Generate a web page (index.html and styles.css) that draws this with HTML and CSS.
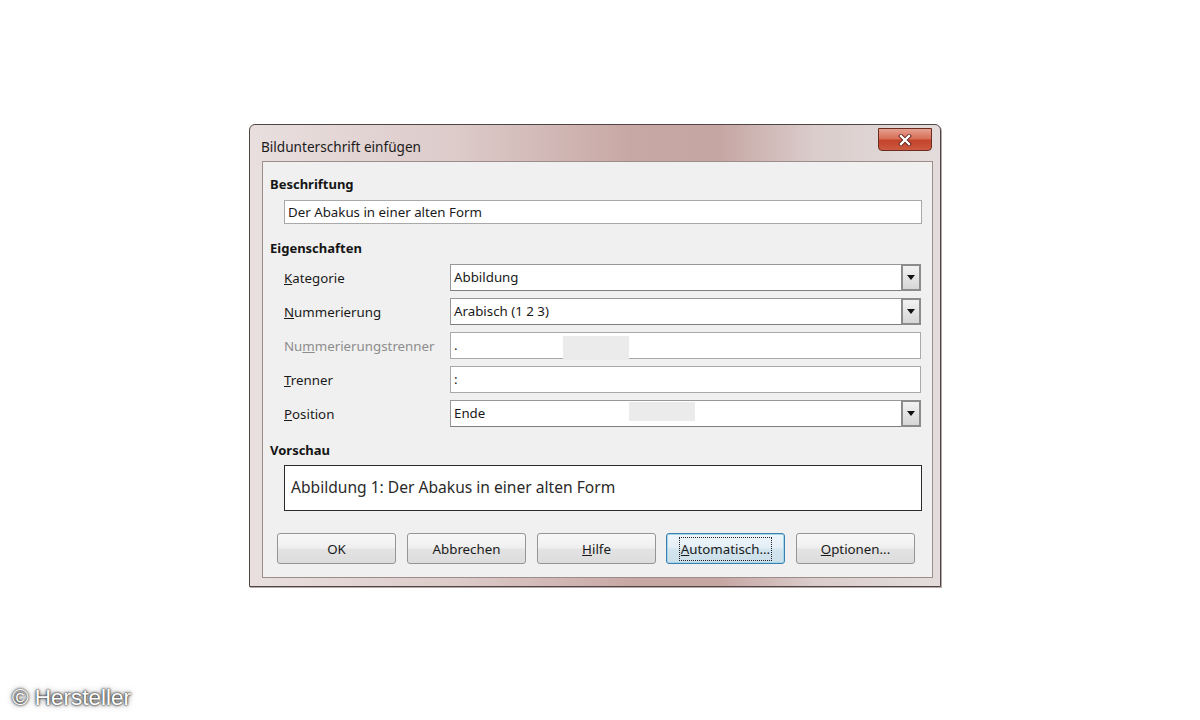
FILE: index.html
```html
<!DOCTYPE html>
<html lang="de">
<head>
    <meta charset="UTF-8">
    <title>Bildunterschrift einfügen</title>
    <link rel="stylesheet" href="styles.css">
</head>
<body>
    <div class="stage">
        <div class="dialog">
            <div class="titlebar">
                <span class="title">Bildunterschrift einfügen</span>
                <button type="button" class="close">
                    <svg width="14" height="12" viewBox="0 0 14 12">
                        <path d="M3 2 L11 10 M11 2 L3 10" stroke="#5a1d14" stroke-width="4" stroke-linecap="square"/>
                        <path d="M3 2 L11 10 M11 2 L3 10" stroke="#fff" stroke-width="2.4" stroke-linecap="square"/>
                    </svg>
                </button>
            </div>

            <div class="client">
                <h2 class="section">Beschriftung</h2>
                <div class="field caption-field">Der Abakus in einer alten Form</div>

                <h2 class="section">Eigenschaften</h2>
                <div class="props">
                    <label class="lbl"><u>K</u>ategorie</label>
                    <div class="field combo">Abbildung<span class="drop"></span></div>

                    <label class="lbl"><u>N</u>ummerierung</label>
                    <div class="field combo">Arabisch (1 2 3)<span class="drop"></span></div>

                    <label class="lbl disabled">Nu<u>m</u>merierungstrenner</label>
                    <div class="field">.<span class="smudge smudge-a"></span></div>

                    <label class="lbl"><u>T</u>renner</label>
                    <div class="field">:</div>

                    <label class="lbl"><u>P</u>osition</label>
                    <div class="field combo">Ende<span class="smudge smudge-b"></span><span class="drop"></span></div>
                </div>

                <h2 class="section preview-head">Vorschau</h2>
                <div class="preview">Abbildung 1: Der Abakus in einer alten Form</div>

                <div class="buttons">
                    <button type="button" class="btn">OK</button>
                    <button type="button" class="btn">Abbrechen</button>
                    <button type="button" class="btn"><u>H</u>ilfe</button>
                    <button type="button" class="btn default"><span class="focus"><u>A</u>utomatisch...</span></button>
                    <button type="button" class="btn"><u>O</u>ptionen...</button>
                </div>
            </div>
        </div>
    </div>

    <p class="credit">© Hersteller</p>
</body>
</html>
```

FILE: styles.css
```css
body {
    margin: 0;
    width: 1200px;
    height: 720px;
    background: #fff;
    font-family: "Noto Sans", "Open Sans", sans-serif;
    font-size: 13.3px;
    color: #1a1a1a;
    position: relative;
    overflow: hidden;
}

.stage {
    padding: 124px 0 0 249px;
}

/* window frame */
.dialog {
    width: 692px;
    height: 463px;
    box-sizing: border-box;
    border: 1px solid #4f4544;
    border-radius: 6px 6px 0 0;
    padding: 0 7px 8px 12px;
    display: flex;
    flex-direction: column;
    background: linear-gradient(to right, #e9dfdf 0%, #dccbc9 30%, #c8a8a5 55%, #c6a6a3 68%, #dacdcc 82%, #e4dcdc 100%);
    box-shadow: 1px 1px 0 #b9a9a8;
}

.titlebar {
    height: 36px;
    display: flex;
    align-items: flex-start;
    justify-content: space-between;
}

.title {
    font-size: 13.6px;
    line-height: 16px;
    margin: 14px 0 0 -1px;
    color: #1b1b1b;
}

.close {
    width: 54px;
    height: 23px;
    margin: 3px 1px 0 0;
    padding: 0;
    border: 1px solid #6b2c22;
    border-radius: 0 0 4px 4px;
    background: linear-gradient(#e6a08f 0%, #d8705a 45%, #c4432b 55%, #cc5a40 100%);
    display: flex;
    align-items: center;
    justify-content: center;
}

/* dialog body */
.client {
    flex: 1;
    background: #f0f0f0;
    border: 1px solid #9c8c8a;
    display: flex;
    flex-direction: column;
}

.section {
    margin: 13px 0 0 7px;
    font-size: 13px;
    line-height: 18px;
    font-weight: bold;
    color: #151515;
}

.field {
    position: relative;
    height: 24px;
    box-sizing: border-box;
    border: 1px solid #a9a9a9;
    background: #fff;
    padding: 0 3px;
    line-height: 22px;
    font-size: 13.3px;
    color: #1a1a1a;
}

.caption-field {
    margin: 7px 10px 0 21px;
}

.props {
    display: grid;
    grid-template-columns: 166px 1fr;
    grid-auto-rows: 27px;
    row-gap: 7px;
    margin: 7px 11px 0 21px;
    align-items: center;
}

.section:nth-of-type(2) {
    margin-top: 15px;
}

.props .field {
    height: 27px;
    line-height: 25px;
}

.lbl {
    font-size: 13.3px;
    color: #1a1a1a;
}

.lbl.disabled {
    color: #8d8d8d;
}

.combo {
    border-color: #979797;
    border-bottom-color: #7d7d7d;
}

.drop {
    position: absolute;
    top: -1px;
    right: -1px;
    width: 20px;
    height: 27px;
    box-sizing: border-box;
    border: 2px solid #8b8b8b;
    background: linear-gradient(#f2f2f2, #d6d6d6);
}

.drop::after {
    content: "";
    position: absolute;
    left: 4px;
    top: 9px;
    border-left: 4px solid transparent;
    border-right: 4px solid transparent;
    border-top: 5px solid #111;
}

/* leftover redraw patches in the separator fields */
.smudge {
    position: absolute;
    background: #ebebeb;
}

.smudge-a {
    left: 112px;
    top: 3px;
    width: 66px;
    height: 24px;
}

.smudge-b {
    left: 178px;
    top: 1px;
    width: 66px;
    height: 19px;
}

.preview-head {
    margin-top: 14px;
}

.preview {
    margin: 6px 10px 0 21px;
    height: 46px;
    box-sizing: border-box;
    border: 1px solid #2a2a2a;
    background: #fff;
    padding: 0 6px;
    line-height: 43px;
    font-size: 15.6px;
    color: #2a2a2a;
}

.buttons {
    display: flex;
    gap: 11px;
    margin: 22px 0 0 14px;
}

.btn {
    width: 119px;
    height: 31px;
    box-sizing: border-box;
    border: 1px solid #959595;
    border-radius: 3px;
    background: linear-gradient(#f8f8f8 0%, #efefef 48%, #e3e3e3 52%, #dcdcdc 100%);
    font-family: inherit;
    font-size: 13.3px;
    color: #1a1a1a;
    padding: 0;
}

.btn.default {
    border-color: #3c7fb1;
    box-shadow: inset 0 0 0 1px #a6d6ea;
    background: linear-gradient(#eef6fa 0%, #e4eff5 48%, #d3e5ee 52%, #cde0ea 100%);
    margin-left: -1px;
}

.focus {
    outline: 1px dotted #222;
    padding: 2px 1px;
}

.credit {
    position: absolute;
    left: 12px;
    top: 685px;
    margin: 0;
    font-family: "Liberation Sans", Arial, sans-serif;
    font-size: 22.5px;
    color: #fff;
    text-shadow: 0 0 2px #222, 0 0 3px #444, 0 0 6px #777;
}
```
